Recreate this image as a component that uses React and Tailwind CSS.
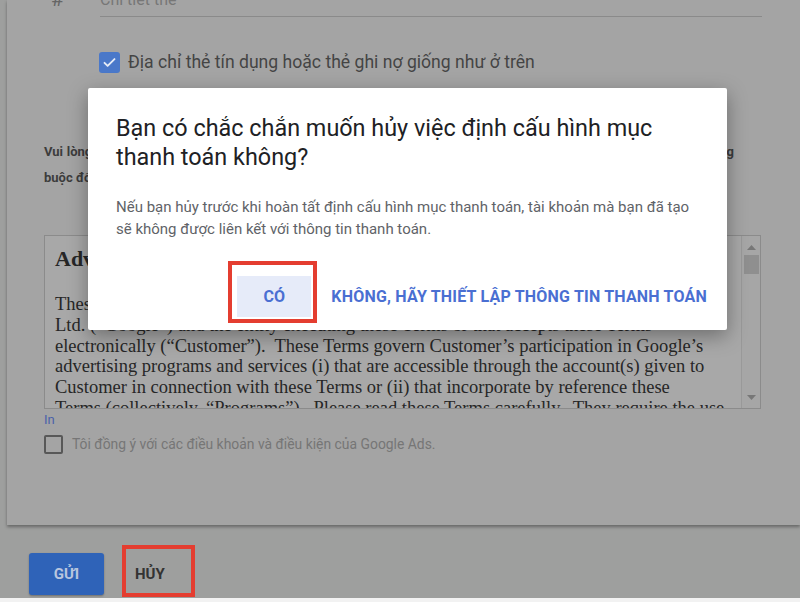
import React from "react";

export default function App() {
  const serifLines = [
    "These Google Ads Terms (“Terms”) are entered into by Google Asia Pacific Pte.",
    "Ltd. (“Google”) and the entity executing these Terms or that accepts these Terms",
    "electronically (“Customer”).  These Terms govern Customer’s participation in Google’s",
    "advertising programs and services (i) that are accessible through the account(s) given to",
    "Customer in connection with these Terms or (ii) that incorporate by reference these",
    "Terms (collectively, “Programs”).  Please read these Terms carefully.  They require the use",
  ];
  return (
    <div className="relative w-[800px] h-[602px] overflow-hidden bg-[#9e9f9e] font-['Roboto','Noto_Sans',sans-serif] flex flex-col">
      {/* Card */}
      <div className="ml-[7px] w-[793px] h-[525px] shrink-0 bg-[#a4a4a4] shadow-[0_2px_3px_rgba(0,0,0,0.35)] pl-[37px] flex flex-col overflow-hidden">
        {/* Row 1: card number input */}
        <div className="flex h-[17px] shrink-0">
          <div className="w-[56px] pl-[7px] h-[17px] flex items-end pb-[8px]">
            <span className="text-[20px] leading-[20px] text-[#666]">#</span>
          </div>
          <div className="w-[662px] h-[17px] border-b border-[#8a8a8a] flex items-end pb-[8px]">
            <span className="text-[16px] leading-[16px] text-[#777]">Chi tiết thẻ</span>
          </div>
        </div>

        {/* Checked checkbox row */}
        <div className="mt-[35px] ml-[55px] flex items-center h-[21px] shrink-0">
          <div className="w-[21px] h-[21px] rounded-[3px] bg-[#4a78c9] flex items-center justify-center">
            <svg width="15" height="15" viewBox="0 0 24 24" fill="none">
              <path d="M4 12.5l5 5L20 6.5" stroke="#e6ecf6" strokeWidth="3" strokeLinecap="round" strokeLinejoin="round" />
            </svg>
          </div>
          <span className="ml-[8px] text-[17.6px] leading-[21px] text-[#444]">Địa chỉ thẻ tín dụng hoặc thẻ ghi nợ giống như ở trên</span>
        </div>

        {/* Info paragraph */}
        <div className="mt-[66px] w-[690px] text-[13px] leading-[26px] font-bold text-[#3c3c3c] whitespace-nowrap shrink-0">
          <div className="text-justify [text-align-last:justify]">Vui lòng đọc kỹ Điều khoản và điều kiện của Google Ads dưới đây. Khi chấp nhận, các điều khoản này sẽ có tính ràng</div>
          <div>buộc đối với bạn và tài khoản Google Ads của bạn.</div>
        </div>

        {/* Terms box */}
        <div className="mt-[44px] w-[717px] h-[174px] shrink-0 border border-[#8b8b8b] bg-[#a8a8a8] flex overflow-hidden">
          <div className="flex-1 pl-[10px] pt-[11px] overflow-hidden font-['Liberation_Serif','Times_New_Roman',serif] text-[#262626]">
            <div className="text-[22px] leading-[24px] font-bold whitespace-nowrap">Advertising Program Terms</div>
            <div className="mt-[23px] text-[18.5px] leading-[20.8px]">
              {serifLines.map((l, i) => (
                <div key={i} className="whitespace-pre">{l}</div>
              ))}
            </div>
          </div>
          <div className="w-[19px] border-l border-[#999] bg-[#a6a6a6] flex flex-col items-center relative">
            <svg className="mt-[9px]" width="9" height="5" viewBox="0 0 9 5">
              <path d="M0 5L4.5 0L9 5Z" fill="#777" />
            </svg>
            <div className="mt-[5px] w-[15px] h-[19px] bg-[#8f8f8f]" />
            <div className="flex-1" />
            <svg className="mb-[8px]" width="9" height="5" viewBox="0 0 9 5">
              <path d="M0 0L4.5 5L9 0Z" fill="#777" />
            </svg>
          </div>
        </div>

        {/* In link */}
        <div className="mt-[3px] text-[13px] leading-[16px] text-[#4a62aa] shrink-0">In</div>

        {/* Unchecked checkbox row */}
        <div className="mt-[7px] flex items-center h-[19px] shrink-0">
          <div className="w-[19px] h-[19px] rounded-[2px] border-2 border-[#585858]" />
          <span className="ml-[9px] text-[13.9px] leading-[19px] text-[#767676]">Tôi đồng ý với các điều khoản và điều kiện của Google Ads.</span>
        </div>
      </div>

      {/* Bottom buttons */}
      <div className="h-[73px] shrink-0 flex items-start pl-[29px]">
        <div className="mt-[28px] w-[75px] h-[42px] rounded-[3px] bg-[#2f63b8] shadow-[0_1px_2px_rgba(0,0,0,0.3)] flex items-center justify-center">
          <span className="text-[15px] font-bold text-[#b9c6df]">GỬI</span>
        </div>
        <div className="mt-[20px] ml-[18px] w-[73px] h-[52px] border-4 border-[#e43d30] flex items-center pl-[9px] pt-[6px]">
          <span className="text-[15px] font-bold text-[#333]">HỦY</span>
        </div>
      </div>
      <div className="h-[4px] bg-[#f2f2f2] shrink-0" />

      {/* Dialog */}
      <div className="absolute left-[88px] top-[88px] w-[639px] h-[242px] bg-white rounded-[2px] shadow-[0_6px_20px_rgba(0,0,0,0.35)] flex flex-col">
        <div className="pl-[28px] pt-[26px] text-[23.4px] leading-[29px] text-[#202124]">
          <div>Bạn có chắc chắn muốn hủy việc định cấu hình mục</div>
          <div>thanh toán không?</div>
        </div>
        <div className="pl-[28px] mt-[24px] text-[15px] leading-[22px] text-[#5f6368]">
          <div>Nếu bạn hủy trước khi hoàn tất định cấu hình mục thanh toán, tài khoản mà bạn đã tạo</div>
          <div>sẽ không được liên kết với thông tin thanh toán.</div>
        </div>
        <div className="mt-[36px] flex items-center justify-end pr-[20px]">
          <div className="relative">
            <div className="w-[74px] h-[41px] bg-[#e6ebf9] flex items-center justify-center">
              <span className="text-[16px] tracking-[0.2px] font-bold text-[#4a6fd2]">CÓ</span>
            </div>
            <div className="absolute left-[-9px] top-[-15px] w-[89px] h-[62px] border-4 border-[#e43d30]" />
          </div>
          <span className="ml-[20px] text-[16px] tracking-[0.2px] font-bold text-[#4a6fd2] whitespace-nowrap">KHÔNG, HÃY THIẾT LẬP THÔNG TIN THANH TOÁN</span>
        </div>
      </div>
    </div>
  );
}
